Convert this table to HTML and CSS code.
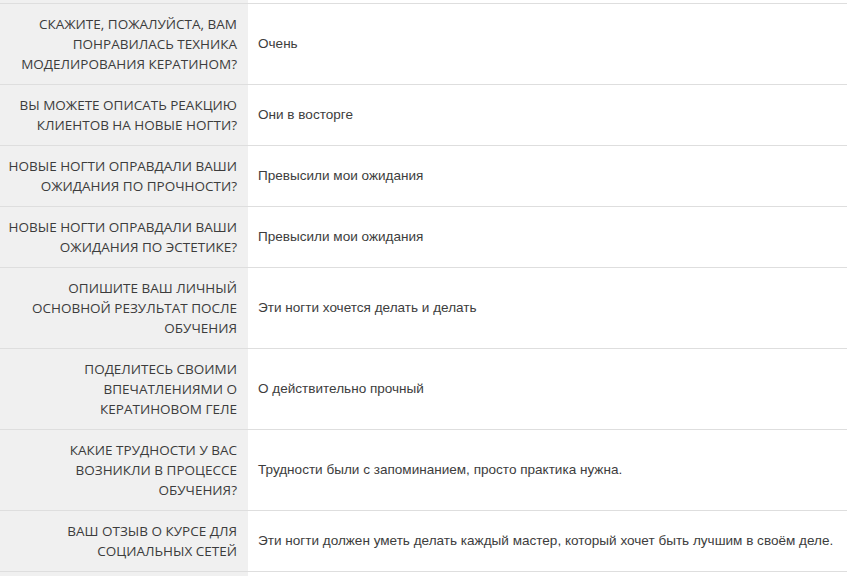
FILE: index.html
```html
<!DOCTYPE html>
<html lang="ru">
<head>
<meta charset="utf-8">
<link rel="stylesheet" href="styles.css">
</head>
<body>
<table class="answers">
  <tr class="stub-top"><th class="q"></th><td class="a"></td></tr>
  <tr><th class="q">Скажите, пожалуйста, вам понравилась техника моделирования кератином?</th><td class="a">Очень</td></tr>
  <tr><th class="q">Вы можете описать реакцию клиентов на новые ногти?</th><td class="a">Они в восторге</td></tr>
  <tr><th class="q">Новые ногти оправдали ваши ожидания по прочности?</th><td class="a">Превысили мои ожидания</td></tr>
  <tr><th class="q">Новые ногти оправдали ваши ожидания по эстетике?</th><td class="a">Превысили мои ожидания</td></tr>
  <tr><th class="q">Опишите ваш личный основной результат после обучения</th><td class="a">Эти ногти хочется делать и делать</td></tr>
  <tr><th class="q">Поделитесь своими впечатлениями о кератиновом геле</th><td class="a">О действительно прочный</td></tr>
  <tr><th class="q">Какие трудности у вас возникли в процессе обучения?</th><td class="a">Трудности были с запоминанием, просто практика нужна.</td></tr>
  <tr><th class="q">Ваш отзыв о курсе для социальных сетей</th><td class="a">Эти ногти должен уметь делать каждый мастер, который хочет быть лучшим в своём деле.</td></tr>
  <tr class="stub-bottom"><th class="q"></th><td class="a"></td></tr>
</table>
</body>
</html>
```
FILE: styles.css
```css
html, body {
  margin: 0;
  padding: 0;
  background: #ffffff;
  overflow: hidden;
}
.answers {
  width: 847px;
  border-collapse: collapse;
  table-layout: fixed;
}
.answers tr {
  border-bottom: 1px solid #dedede;
}
.q {
  width: 248px;
  box-sizing: border-box;
  background: #f0f0f0;
  padding: 10px 11px 10px 4px;
  text-align: right;
  text-transform: uppercase;
  font-family: "Open Sans", sans-serif;
  font-weight: 400;
  font-size: 13.5px;
  line-height: 20px;
  color: #3c3c3c;
  vertical-align: middle;
}
.a {
  padding: 10px 10px;
  font-family: "Liberation Sans", Arial, sans-serif;
  font-size: 13.55px;
  line-height: 20px;
  color: #3d3d3d;
  vertical-align: middle;
  text-align: left;
}
.stub-top .q, .stub-top .a {
  padding: 0;
  height: 3px;
  line-height: 0;
}
.stub-bottom .q, .stub-bottom .a {
  padding: 0;
  height: 40px;
}
```
